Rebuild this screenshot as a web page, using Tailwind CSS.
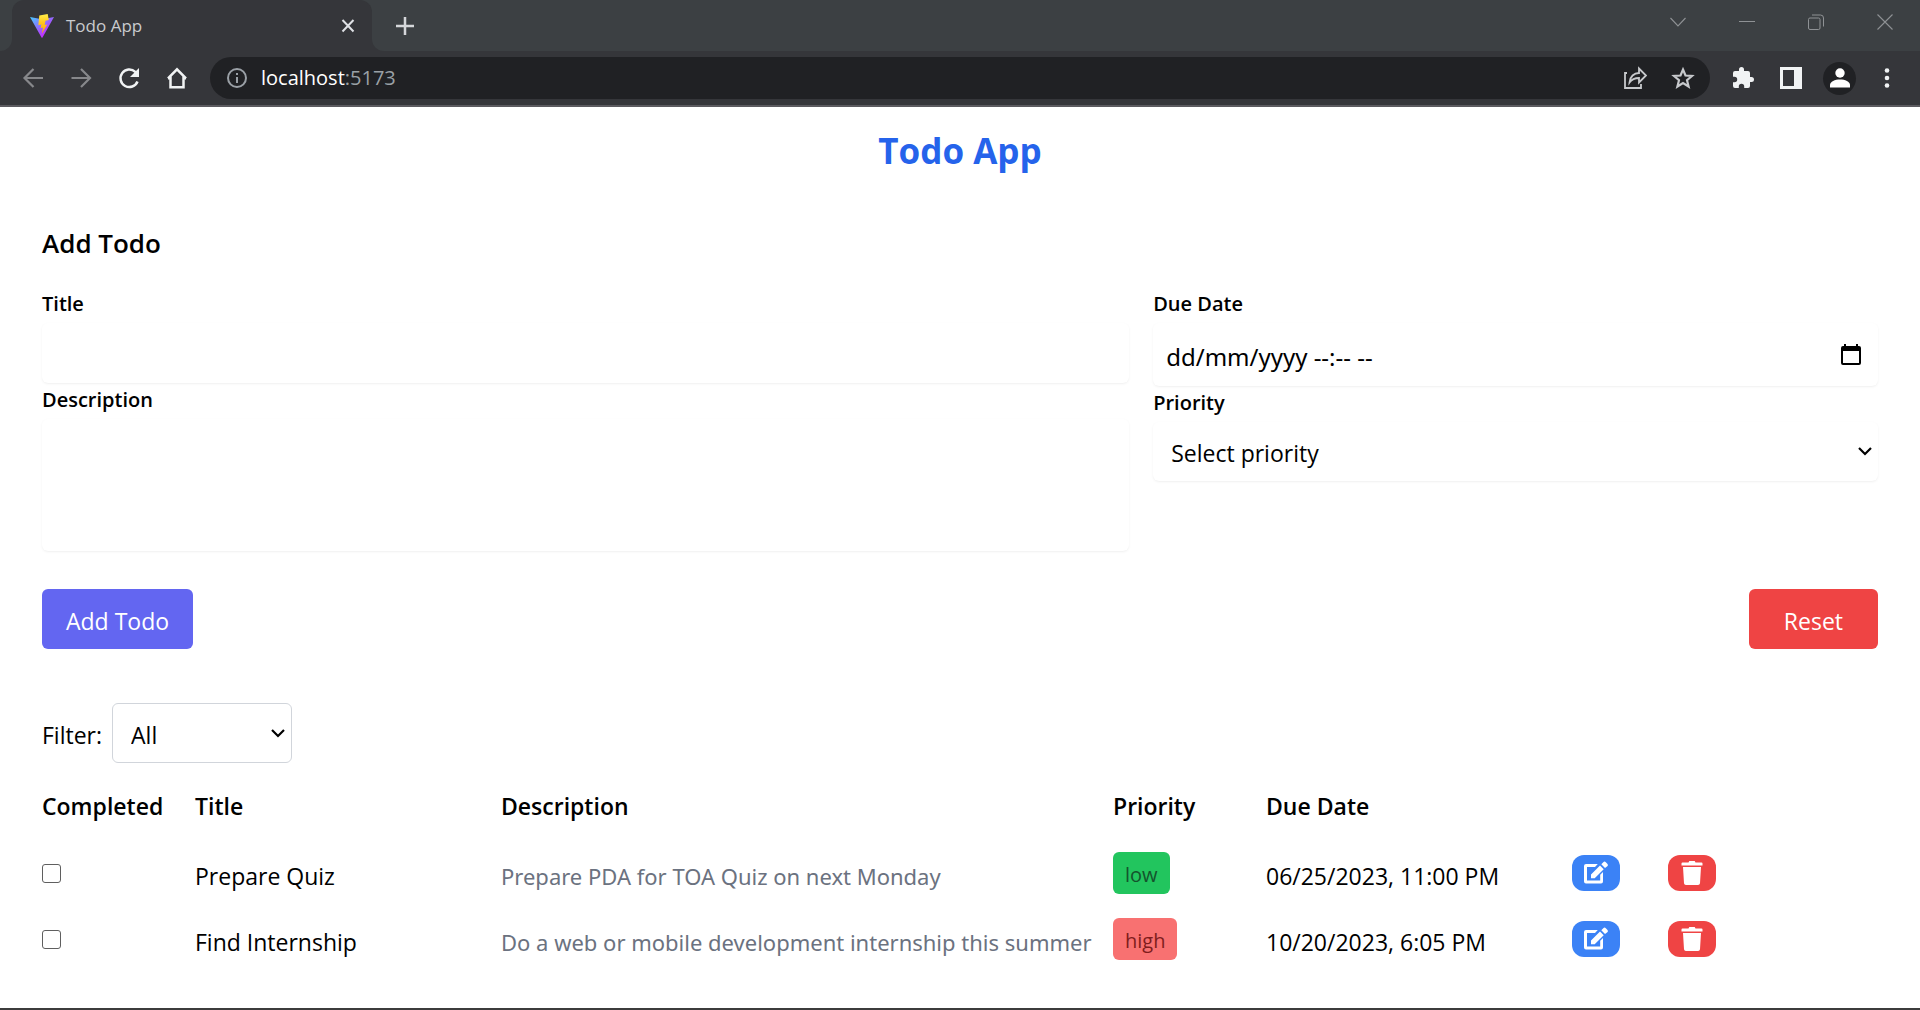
<!DOCTYPE html>
<html lang="en">
<head>
<meta charset="utf-8">
<title>Todo App</title>
<script src="https://cdn.jsdelivr.net/npm/@tailwindcss/browser@4"></script>
</head>
<body class="flex min-h-screen flex-col border-b-2 border-[#3c3c3c] bg-white font-['Open_Sans','Noto_Sans',sans-serif] text-[23px] text-black">

<!-- Browser window bar -->
<header class="border-b-2 border-[#5b5a5f] bg-[#35363a] text-[#f1f3f4]">
  <div class="flex h-[51px]">
    <div class="w-3 rounded-br-xl bg-[#3c4043]"></div>
    <div class="w-[360px] bg-[#3c4043]">
      <div class="flex h-full items-center rounded-t-xl bg-[#35363a] pr-4 pl-[18px]">
        <svg class="size-6" viewBox="0 0 24 24" fill="none">
          <defs>
            <linearGradient id="v" x1="0" y1="2" x2="14" y2="20" gradientUnits="userSpaceOnUse"><stop stop-color="#41d1ff"/><stop offset="1" stop-color="#bd34fe"/></linearGradient>
            <linearGradient id="b" x1="12" y1="1" x2="13" y2="19" gradientUnits="userSpaceOnUse"><stop stop-color="#ffea45"/><stop offset=".4" stop-color="#ffc81f"/><stop offset="1" stop-color="#ffa800"/></linearGradient>
          </defs>
          <path d="M0 3 12 5.200 24 3 12.500 23.500Q12 24 11.500 23.500Z" fill="url(#v)"/>
          <path d="M17.700 0 9.300 1.600 8.300 11.200 11.300 10.600 10.600 14.200 13 13.600 11.800 19.800 17.200 10.500 14.700 10.900 15.500 6.800 18.800 6Z" fill="url(#b)"/>
        </svg>
        <span class="ml-3 flex-1 text-[17px] text-[#c9cbce]">Todo App</span>
        <button type="button" aria-label="Close tab"><svg class="size-4" viewBox="0 0 16 16" fill="none" stroke="#dfe1e5" stroke-width="2"><path d="m2.500 2 11 11.500M13.500 2 2.500 13.500"/></svg></button>
      </div>
    </div>
    <div class="flex flex-1 justify-between rounded-bl-xl bg-[#3c4043] pl-6">
      <button type="button" aria-label="New tab"><svg class="size-[18px]" viewBox="0 0 18 18" fill="none" stroke="#d5d7da" stroke-width="2.500"><path d="M9 0v18M0 9h18"/></svg></button>
      <div class="flex h-[43px] items-center gap-[53px] pr-[27px] text-[#8f9295]">
        <button type="button" aria-label="Search tabs"><svg class="size-4" viewBox="0 0 16 16" fill="none" stroke="currentColor" stroke-width="1.100"><path d="m.5 4 7.500 8 7.500-8"/></svg></button>
        <button type="button" aria-label="Minimize"><svg class="size-4" viewBox="0 0 16 16" fill="none" stroke="currentColor"><path d="M0 7.500h16"/></svg></button>
        <button type="button" aria-label="Restore"><svg class="size-4" viewBox="0 0 16 16" fill="none" stroke="currentColor"><rect x=".5" y="4" width="11.500" height="11.500" rx="1.500"/><path d="M4 1h8.500a3 3 0 0 1 3 3v8.500"/></svg></button>
        <button type="button" aria-label="Close window"><svg class="size-4" viewBox="0 0 16 16" fill="none" stroke="currentColor" stroke-width="1.100"><path d="m.5.5 15 15M15.500.5l-15 15"/></svg></button>
      </div>
    </div>
  </div>
  <div class="flex h-[54px] items-center pr-[30px] pl-[21px]">
    <div class="flex items-center gap-6">
      <button type="button" aria-label="Back"><svg class="size-6" viewBox="0 0 24 24" fill="none" stroke="#87888b" stroke-width="2.200"><path d="M22 12H3.500M12.500 3 3.500 12l9 9"/></svg></button>
      <button type="button" aria-label="Forward"><svg class="size-6" viewBox="0 0 24 24" fill="none" stroke="#87888b" stroke-width="2.200"><path d="M2.500 12H21M12 3l9 9-9 9"/></svg></button>
      <button type="button" aria-label="Reload"><svg class="size-6" viewBox="0 0 24 24" fill="none"><path d="M20.500 15.500A8.800 8.800 0 1 1 18.300 5.800L20 7.500" stroke="currentColor" stroke-width="2.500"/><path d="M22 2v9h-9z" fill="currentColor"/></svg></button>
      <button type="button" aria-label="Home"><svg class="size-6" viewBox="0 0 24 24" fill="none" stroke="currentColor" stroke-width="2.500"><path d="M5.500 11v10.300h13V11M3 12.300h2.500V10M21 12.300h-2.500V10M3 12.300 12 3.300l9 9"/></svg></button>
    </div>
    <div class="ml-[21px] flex h-[42px] flex-1 items-center rounded-full bg-[#202124] pr-[15px] pl-[17px]">
      <svg class="size-5" viewBox="0 0 20 20" fill="none" stroke="#9aa0a6" stroke-width="2"><circle cx="10" cy="10" r="9"/><path d="M10 9v6M10 5v2"/></svg>
      <a href="http://localhost:5173" class="ml-[14px] flex-1 text-xl text-white">localhost<span class="text-[#9aa0a6]">:5173</span></a>
      <button type="button" aria-label="Share"><svg class="size-6" viewBox="0 0 24 24" fill="none" stroke="#c7c9cc" stroke-width="1.800"><path d="M4 7H2v15h16v-4"/><path d="M6.500 16.500C7 10.500 11 7 16 7V2.500l7 7-7 7V12c-4 0-7 1-9.500 4.500Z"/></svg></button>
      <button type="button" class="ml-6" aria-label="Bookmark"><svg class="size-6" viewBox="0 0 24 24" fill="none" stroke="#c7c9cc" stroke-width="2.200"><path d="m12 3.500 2.500 6 6.500.5-5 4.200 1.600 6.300L12 17l-5.600 3.500L8 14.200 3 10l6.500-.5Z"/></svg></button>
    </div>
    <div class="flex items-center text-[#f1f3f4]">
      <button type="button" class="ml-[21px]" aria-label="Extensions"><svg class="size-6" viewBox="0 0 24 24" fill="currentColor"><path d="M20.500 11H19V7a2 2 0 0 0-2-2h-4V3.500a2.500 2.500 0 0 0-5 0V5H4a2 2 0 0 0-2 2v3.800h1.500a2.700 2.700 0 0 1 0 5.400H2V20a2 2 0 0 0 2 2h3.800v-1.500a2.700 2.700 0 0 1 5.400 0V22H17a2 2 0 0 0 2-2v-4h1.500a2.500 2.500 0 0 0 0-5Z"/></svg></button>
      <button type="button" class="ml-[25px]" aria-label="Side panel"><svg class="h-[22px] w-[22px]" viewBox="0 0 22 22"><path d="M0 0h22v22H0ZM3 3v16h11V3Z" fill="currentColor" fill-rule="evenodd"/></svg></button>
      <button type="button" class="ml-[21px] grid size-[33px] place-items-center rounded-full bg-[#202124]" aria-label="Profile"><svg class="size-5" viewBox="0 0 20 20" fill="#fff"><circle cx="10" cy="5" r="4.700"/><path d="M0 19.500V17c0-3.500 5-5.500 10-5.500s10 2 10 5.500v2.500Z"/></svg></button>
      <button type="button" class="ml-7" aria-label="Menu"><svg class="h-5 w-[6px]" viewBox="0 0 6 20" fill="currentColor"><circle cx="3" cy="2.500" r="2.300"/><circle cx="3" cy="10" r="2.300"/><circle cx="3" cy="17.500" r="2.300"/></svg></button>
    </div>
  </div>
</header>

<main class="px-[42px] pt-6">
  <h1 class="text-center text-[35px] leading-10 font-bold text-[#2563eb]">Todo App</h1>

  <form class="mt-[52px]">
    <h2 class="text-[26px] leading-10 font-semibold">Add Todo</h2>
    <div class="mt-6 grid grid-cols-[3fr_2fr] gap-6">
      <div class="flex flex-col">
        <label for="title" class="h-9 text-xl leading-[34px] font-semibold">Title</label>
        <input id="title" type="text" class="h-[60px] rounded-md bg-white px-3 shadow-sm shadow-black/5 outline-none">
        <label for="desc" class="h-9 text-xl leading-[34px] font-semibold">Description</label>
        <textarea id="desc" class="h-[132px] resize-none rounded-md bg-white px-3 shadow-sm shadow-black/5 outline-none"></textarea>
      </div>
      <div class="flex flex-col">
        <label for="due" class="h-9 text-xl leading-[34px] font-semibold">Due Date</label>
        <div class="flex h-[63px] items-center rounded-md bg-white pr-[15px] pl-[13px] shadow-sm shadow-black/5">
          <input id="due" type="text" placeholder="dd/mm/yyyy --:-- --" class="min-w-0 flex-1 pt-1 font-['Noto_Sans',sans-serif] text-2xl outline-none placeholder:text-black">
          <button type="button" aria-label="Open calendar"><svg class="size-6" viewBox="0 0 24 24"><path d="M5 1h2v2h10V1h2v2h1a2 2 0 0 1 2 2v15a2 2 0 0 1-2 2H4a2 2 0 0 1-2-2V5a2 2 0 0 1 2-2h1ZM4 8v12h16V8Z" fill-rule="evenodd"/></svg></button>
        </div>
        <label for="priority" class="h-9 text-xl leading-[34px] font-semibold">Priority</label>
        <div class="relative rounded-md bg-white shadow-sm shadow-black/5">
          <select id="priority" class="h-[59px] w-full appearance-none pt-1 pl-[18px] outline-none"><option>Select priority</option><option>low</option><option>medium</option><option>high</option></select>
          <svg class="pointer-events-none absolute top-[25px] right-[6px] h-[9px] w-[14px]" viewBox="0 0 14 9" fill="none" stroke="#000" stroke-width="2.200"><path d="m1 1 6 6 6-6"/></svg>
        </div>
      </div>
    </div>
    <div class="mt-[38px] flex justify-between text-white">
      <button type="submit" class="h-[60px] rounded-md bg-[#6366f1] px-6 pt-1">Add Todo</button>
      <button type="reset" class="h-[60px] rounded-md bg-[#ef4444] px-[35px] pt-1">Reset</button>
    </div>
  </form>

  <div class="mt-[54px] flex items-center">
    <label for="filter" class="pt-1">Filter:</label>
    <div class="relative ml-[10px]">
      <select id="filter" class="h-[60px] w-[180px] appearance-none rounded-md border border-[#d1d5db] bg-white pt-1 pl-[18px]"><option>All</option><option>Completed</option><option>Pending</option></select>
      <svg class="pointer-events-none absolute top-[26px] right-[7px] h-[9px] w-[14px]" viewBox="0 0 14 9" fill="none" stroke="#000" stroke-width="2.200"><path d="m1 1 6 6 6-6"/></svg>
    </div>
  </div>

  <table class="mt-[23px] w-full table-fixed text-left whitespace-nowrap">
    <colgroup><col class="w-1/12"><col class="w-2/12"><col class="w-4/12"><col class="w-1/12"><col class="w-2/12"><col class="w-2/12"></colgroup>
    <thead>
      <tr class="h-[54px] align-top leading-10">
        <th class="font-semibold">Completed</th><th class="font-semibold">Title</th><th class="font-semibold">Description</th><th class="font-semibold">Priority</th><th class="font-semibold">Due Date</th><th aria-label="Actions"></th>
      </tr>
    </thead>
    <tbody>
      <tr class="h-[66px]">
        <td><input type="checkbox" aria-label="Prepare Quiz completed" class="block size-[19px] appearance-none rounded-[3px] border border-[#5f5f5f]"></td>
        <td class="pt-[6px]">Prepare Quiz</td>
        <td class="pt-[6px] font-['Noto_Sans',sans-serif] text-[22px] text-[#6b7280]">Prepare PDA for TOA Quiz on next Monday</td>
        <td><span class="inline-block h-[42px] rounded-md bg-[#22c55e] px-3 pt-[2px] align-middle text-xl leading-[42px] text-[#14532d]">low</span></td>
        <td class="pt-[6px]">06/25/2023, 11:00 PM</td>
        <td>
          <div class="flex gap-12">
            <button type="button" class="grid h-9 w-12 place-items-center rounded-xl bg-[#3b82f6]" aria-label="Edit"><svg class="size-6" viewBox="0 0 24 24" fill="#fff"><path d="M13.800 3H2a2 2 0 0 0-2 2v15.500a2 2 0 0 0 2 2h15a2 2 0 0 0 2-2V11l-2.800 2.800v5.700H3V6h8ZM7 13.500 16 4.500 19.700 8.200 10.700 17.300H7ZM17.300 3.200 19.300 1.200a1.800 1.800 0 0 1 2.500 0l1.500 1.500a1.800 1.800 0 0 1 0 2.500L21 7Z"/></svg></button>
            <button type="button" class="grid h-9 w-12 place-items-center rounded-xl bg-[#ef4444]" aria-label="Delete"><svg class="size-6" viewBox="0 0 24 24" fill="#fff"><path d="M2.500 1.500h6L9.300 0h5.400l.8 1.500h6a1 1 0 0 1 1 1v2h-21v-2a1 1 0 0 1 1-1ZM3 6h18l-1 16.300a2 2 0 0 1-2 1.700H6a2 2 0 0 1-2-1.700Z"/></svg></button>
          </div>
        </td>
      </tr>
      <tr class="h-[66px]">
        <td><input type="checkbox" aria-label="Find Internship completed" class="block size-[19px] appearance-none rounded-[3px] border border-[#5f5f5f]"></td>
        <td class="pt-[6px]">Find Internship</td>
        <td class="pt-[6px] font-['Noto_Sans',sans-serif] text-[22px] text-[#6b7280]">Do a web or mobile development internship this summer</td>
        <td><span class="inline-block h-[42px] rounded-md bg-[#f87171] px-3 pt-[2px] align-middle text-xl leading-[42px] text-[#7f1d1d]">high</span></td>
        <td class="pt-[6px]">10/20/2023, 6:05 PM</td>
        <td>
          <div class="flex gap-12">
            <button type="button" class="grid h-9 w-12 place-items-center rounded-xl bg-[#3b82f6]" aria-label="Edit"><svg class="size-6" viewBox="0 0 24 24" fill="#fff"><path d="M13.800 3H2a2 2 0 0 0-2 2v15.500a2 2 0 0 0 2 2h15a2 2 0 0 0 2-2V11l-2.800 2.800v5.700H3V6h8ZM7 13.500 16 4.500 19.700 8.200 10.700 17.300H7ZM17.300 3.200 19.300 1.200a1.800 1.800 0 0 1 2.500 0l1.500 1.500a1.800 1.800 0 0 1 0 2.500L21 7Z"/></svg></button>
            <button type="button" class="grid h-9 w-12 place-items-center rounded-xl bg-[#ef4444]" aria-label="Delete"><svg class="size-6" viewBox="0 0 24 24" fill="#fff"><path d="M2.500 1.500h6L9.300 0h5.400l.8 1.500h6a1 1 0 0 1 1 1v2h-21v-2a1 1 0 0 1 1-1ZM3 6h18l-1 16.300a2 2 0 0 1-2 1.700H6a2 2 0 0 1-2-1.700Z"/></svg></button>
          </div>
        </td>
      </tr>
    </tbody>
  </table>
</main>
</body>
</html>
